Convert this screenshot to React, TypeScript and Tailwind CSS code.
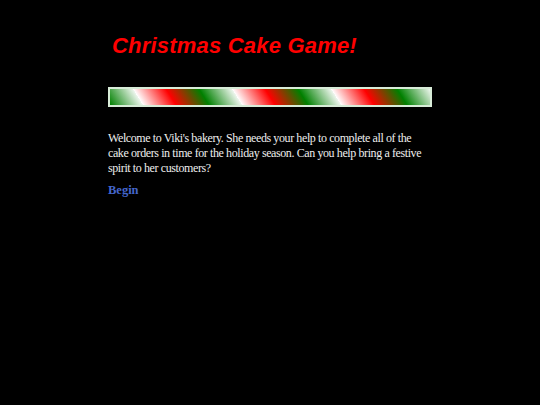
export default function App() {
  return (
    <div className="min-h-[405px] w-full bg-black">
      <div className="mx-auto w-[324px] pt-[31px]">
        <h1 className="pl-[4px] text-[22px] font-bold italic leading-[30px] tracking-[0.2px] text-[#f00] [font-family:'Comic_Sans_MS','Liberation_Sans',sans-serif]">
          Christmas Cake Game!
        </h1>

        {/* candy cane stripe */}
        <div className="mt-[26px] h-[20px] border-2 border-[#d8ecd8] bg-[repeating-linear-gradient(58deg,#008000_0px,#eef6ee_28px,#ffffff_28px,#ff0000_56px,#008000_84px)]" />

        <p className="mt-[24px] whitespace-nowrap text-[12px] leading-[15px] tracking-[-0.4px] text-[#eee] [font-family:Georgia,'Liberation_Serif',serif]">
          Welcome to Viki's bakery. She needs your help to complete all of the
          <br />
          cake orders in time for the holiday season. Can you help bring a festive
          <br />
          spirit to her customers?
        </p>

        <a href="#" className="mt-[7px] block text-[12.5px] font-bold leading-[15px] text-[#4466cc] [font-family:Georgia,'Liberation_Serif',serif]">
          Begin
        </a>
      </div>
    </div>
  );
}
